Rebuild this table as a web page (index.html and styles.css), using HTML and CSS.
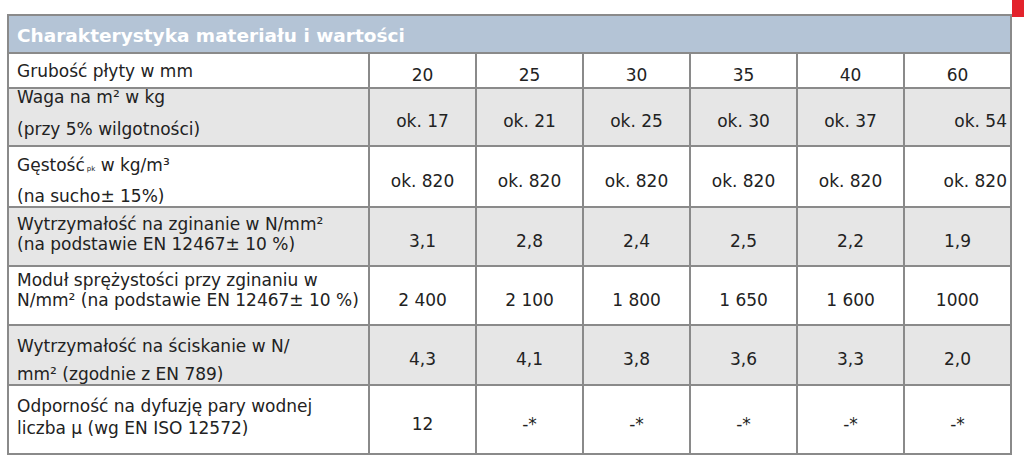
FILE: index.html
```html
<!DOCTYPE html>
<html lang="pl">
<head>
  <meta charset="UTF-8">
  <title>Charakterystyka materiału i wartości</title>
  <link rel="stylesheet" href="styles.css">
</head>
<body>

  <div class="corner-tab"></div>

  <table class="spec-table">
    <colgroup>
      <col class="col-label">
      <col><col><col><col><col><col>
    </colgroup>
    <thead>
      <tr class="row-head">
        <th colspan="7">Charakterystyka materiału i wartości</th>
      </tr>
    </thead>
    <tbody>
      <tr class="row-1">
        <td class="label"><span>Grubość płyty w mm</span></td>
        <td>20</td><td>25</td><td>30</td><td>35</td><td>40</td><td>60</td>
      </tr>
      <tr class="row-2 shaded">
        <td class="label"><span>Waga na m² w kg</span><span>(przy 5% wilgotności)</span></td>
        <td>ok. 17</td><td>ok. 21</td><td>ok. 25</td><td>ok. 30</td><td>ok. 37</td><td class="right">ok. 54</td>
      </tr>
      <tr class="row-3">
        <td class="label"><span>Gęstość<small>pk</small> w kg/m³</span><span>(na sucho± 15%)</span></td>
        <td>ok. 820</td><td>ok. 820</td><td>ok. 820</td><td>ok. 820</td><td>ok. 820</td><td class="right">ok. 820</td>
      </tr>
      <tr class="row-4 shaded">
        <td class="label"><span>Wytrzymałość na zginanie w N/mm²</span><span>(na podstawie EN 12467± 10 %)</span></td>
        <td>3,1</td><td>2,8</td><td>2,4</td><td>2,5</td><td>2,2</td><td>1,9</td>
      </tr>
      <tr class="row-5">
        <td class="label"><span>Moduł sprężystości przy zginaniu w</span><span>N/mm² (na podstawie EN 12467± 10 %)</span></td>
        <td>2 400</td><td>2 100</td><td>1 800</td><td>1 650</td><td>1 600</td><td>1000</td>
      </tr>
      <tr class="row-6 shaded">
        <td class="label"><span>Wytrzymałość na ściskanie w N/</span><span>mm² (zgodnie z EN 789)</span></td>
        <td>4,3</td><td>4,1</td><td>3,8</td><td>3,6</td><td>3,3</td><td>2,0</td>
      </tr>
      <tr class="row-7">
        <td class="label"><span>Odporność na dyfuzję pary wodnej</span><span>liczba μ (wg EN ISO 12572)</span></td>
        <td>12</td><td>-*</td><td>-*</td><td>-*</td><td>-*</td><td>-*</td>
      </tr>
    </tbody>
  </table>

</body>
</html>
```

FILE: styles.css
```css
/* Global Styles */
* {
  margin: 0;
  padding: 0;
  box-sizing: border-box;
}

body {
  font-family: 'DejaVu Sans', Verdana, sans-serif;
  background: #fff;
  color: #222;
  padding: 14px 0 0 7px;
  overflow: hidden;
}

/* red tab in the top right corner */
.corner-tab {
  position: absolute;
  top: 0;
  right: 0;
  width: 12px;
  height: 17px;
  background-color: #e3232c;
}

.spec-table {
  width: 1005px;
  border-collapse: collapse;
  table-layout: fixed;
  font-size: 17px;
}

.col-label {
  width: 361px;
}

.spec-table th,
.spec-table td {
  border: 2px solid #8a8a8a;
}

/* Header */
.row-head th {
  height: 38px;
  background-color: #b4c4d6;
  color: #fff;
  font-size: 18.5px;
  font-weight: bold;
  text-align: left;
  padding: 2px 0 0 8px;
}

/* Value cells */
.spec-table td {
  text-align: center;
  vertical-align: middle;
  padding: 8px 0 0 0;
}

.spec-table td.right {
  text-align: right;
  padding-right: 3px;
}

/* Label cells */
.spec-table td.label {
  text-align: left;
  vertical-align: top;
  padding: 0 0 0 8px;
}

.label span {
  display: block;
  line-height: 20px;
  white-space: nowrap;
}

.label span:first-child {
  margin-top: var(--top, 0px);
}

.label span + span {
  margin-top: var(--gap, 0px);
}

.label small {
  font-size: 7px;
  margin-left: 2px;
}

.shaded td {
  background-color: #e6e6e6;
}

/* Row heights and label line spacing */
.row-1 { height: 35px; --top: 7px; }
.row-2 { height: 58px; --top: -2px; --gap: 12px; }
.row-3 { height: 58px; --top: 8px; --gap: 7px; }
.row-4 { height: 59px; --top: 6px; --gap: 0px; }
.row-5 { height: 59px; --top: 3px; --gap: -0.5px; }
.row-6 { height: 60px; --top: 10px; --gap: 8px; }
.row-7 { height: 69px; --top: 10px; --gap: 2px; }
```
